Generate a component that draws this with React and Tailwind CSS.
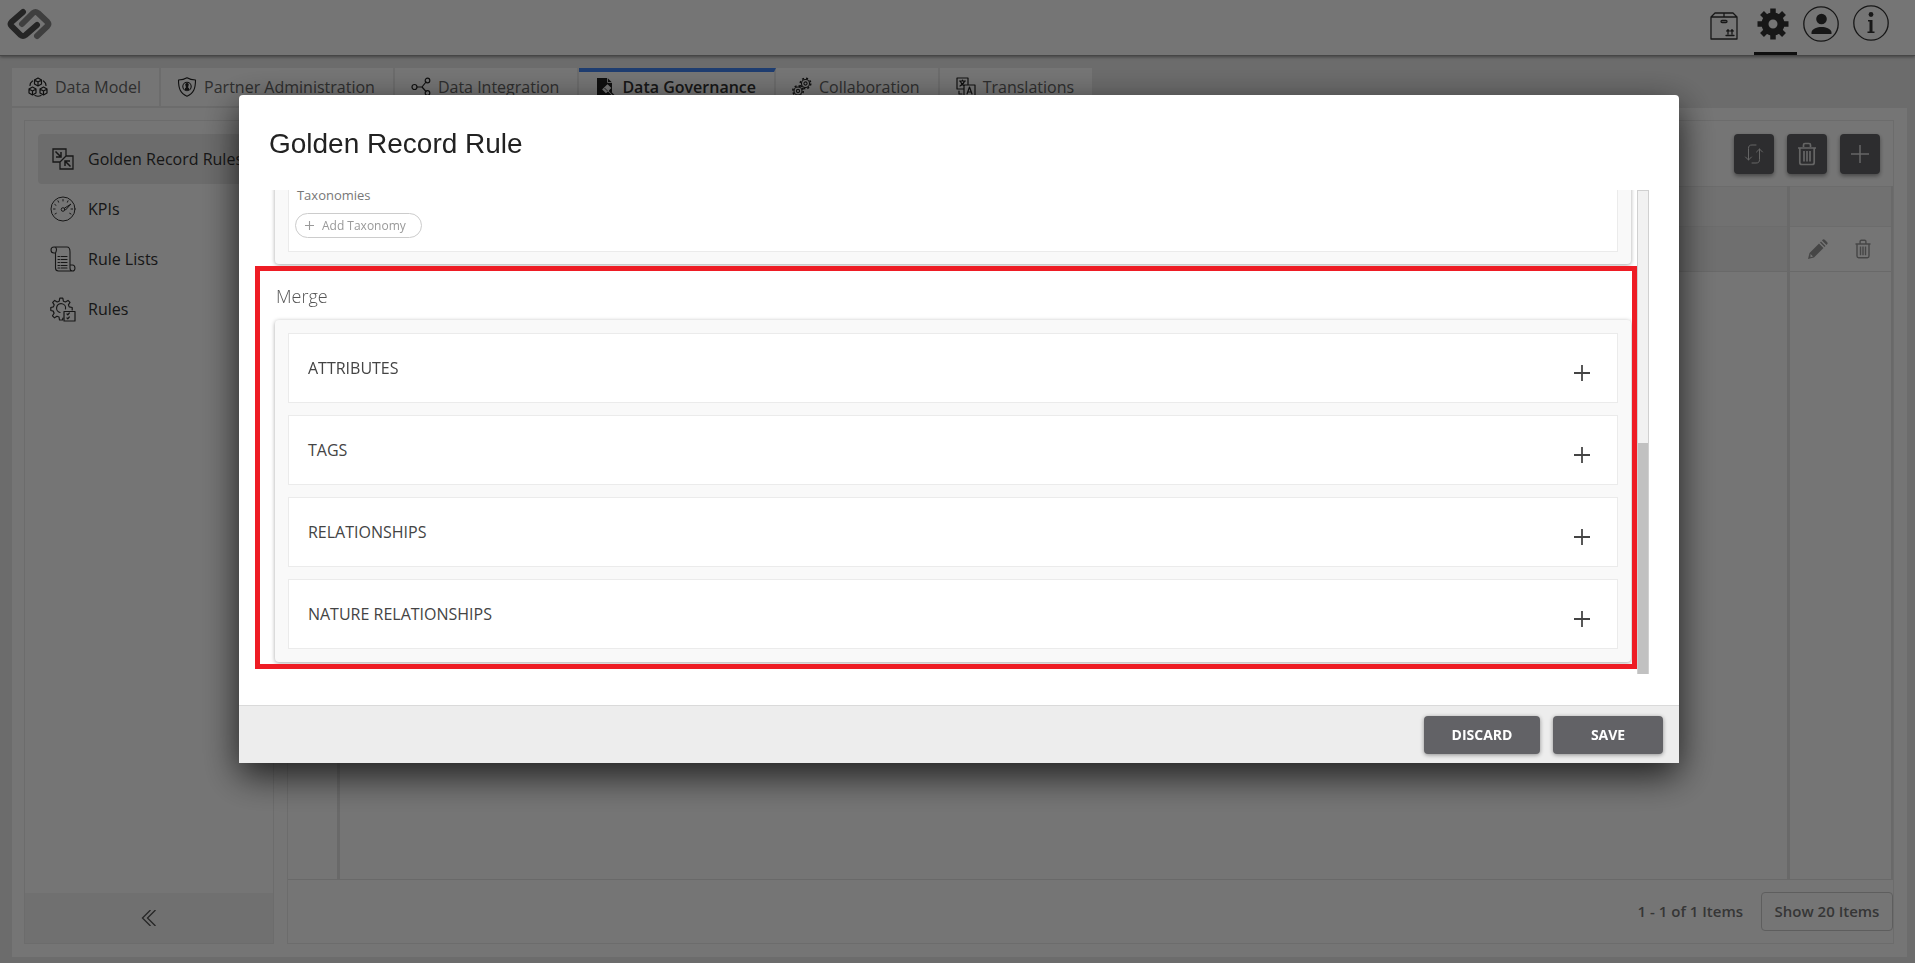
import { useState } from 'react';

const stroke = { fill: 'none', stroke: 'currentColor', strokeLinecap: 'round', strokeLinejoin: 'round' };

function Logo() {
  return (
    <svg className="w-[46px] h-8" viewBox="0 0 46 32" fill="none" strokeWidth="6" strokeLinecap="round" strokeLinejoin="round">
      <path d="M16 16 L27 5 Q29.500 3 32 5 L41.500 14 Q43.500 16 41.500 18 L31 28" stroke="#8a8a8a" />
      <path d="M17 4 L5.500 14 Q3.500 16 5.500 18 L14.500 27 Q17 29 19.500 27 L31 17" stroke="#525252" />
    </svg>
  );
}

function PackageIcon() {
  return (
    <svg className="w-7 h-7" viewBox="0 0 28 28" {...stroke} strokeWidth="1.3">
      <path d="M1 5h26v22H1zM1 5l4-4h18l4 4M14 1v4" />
      <rect x="11" y="8.500" width="6" height="2" rx="1" />
      <path d="M16 23.500h8M18 22v-4M22 22v-4M16.800 19l1.200-1.200 1.200 1.200M20.800 19l1.200-1.200 1.200 1.200" />
    </svg>
  );
}

function GearIcon() {
  return (
    <svg className="w-8 h-8" viewBox="0 0 32 32" fill="none" stroke="currentColor">
      <circle cx="16" cy="16" r="8" strokeWidth="7" />
      <path d="M16 .5v6M16 25.500v6M.5 16h6M25.500 16h6M5 5l4.500 4.500M22.500 22.500L27 27M27 5l-4.500 4.500M9.500 22.500L5 27" strokeWidth="5.500" />
    </svg>
  );
}

function UserIcon() {
  return (
    <svg className="w-9 h-9" viewBox="0 0 36 36" fill="currentColor">
      <circle cx="18" cy="18" r="17.200" fill="none" stroke="currentColor" strokeWidth="1.300" />
      <circle cx="18.500" cy="13" r="5.300" />
      <path d="M8.500 28v-2c1-3.500 5.500-5 10-5s9 1.500 10 5v2z" />
    </svg>
  );
}

function InfoIcon() {
  return (
    <svg className="w-9 h-9" viewBox="0 0 36 36" fill="currentColor">
      <circle cx="18" cy="18" r="17.200" fill="none" stroke="currentColor" strokeWidth="1.300" />
      <circle cx="18" cy="9.500" r="2.400" />
      <path d="M15 15h4.500v11.500H21.500v1.500h-7v-1.500H16.500V16.500H15z" />
    </svg>
  );
}

function CubesIcon() {
  return (
    <svg className="w-5 h-5 shrink-0" viewBox="0 0 20 20" {...stroke} strokeWidth="1.2">
      <path d="M10 1l3.500 2v4L10 9 6.500 7V3zM6.500 3L10 5l3.500-2M10 5v4" />
      <path d="M4.500 10L8 12v4l-3.500 2L1 16v-4zM1 12l3.500 2L8 12M4.500 14v4" />
      <path d="M15.500 10l3.500 2v4l-3.500 2-3.500-2v-4zM12 12l3.500 2 3.500-2M15.500 14v4" />
      <path d="M4.500 4C2.500 5.500 2 7 2 8.500M15.500 4c2 1.500 2.500 3 2.500 4.500M7 18.500c2 1 4 1 6 0" />
    </svg>
  );
}

function ShieldIcon() {
  return (
    <svg className="w-5 h-5 shrink-0" viewBox="0 0 20 20" {...stroke} strokeWidth="1.1">
      <path d="M10 .8c2.500 1.600 5.500 2.200 8.500 2.200 0 8-1.500 13-8.500 16.200C3 16 1.500 11 1.500 3 4.500 3 7.500 2.400 10 .8z" />
      <circle cx="10" cy="9.500" r="4.200" />
      <circle cx="10" cy="7.800" r="1.200" fill="currentColor" />
      <path d="M9.300 9h1.400v2.500h.8v1h-3v-1h.8z" fill="currentColor" />
    </svg>
  );
}

function ShareIcon() {
  return (
    <svg className="w-5 h-5 shrink-0" viewBox="0 0 20 20" {...stroke} strokeWidth="1.200">
      <circle cx="3.500" cy="10" r="2.500" />
      <circle cx="16.500" cy="3.500" r="2.300" />
      <circle cx="16.500" cy="16" r="2.300" />
      <path d="M6 10h5l4-5M11 10l4 4.500" />
    </svg>
  );
}

function GovernIcon() {
  return (
    <svg className="w-5 h-5 shrink-0" viewBox="0 0 20 20" fill="currentColor">
      <path d="M2 1h10.500L17 5.500V19H2z" />
      <path d="M12.500 1v4.500H17" fill="none" stroke="#fff" strokeWidth=".8" />
      <path d="M8 12.500l4.500-4.500 3 3-4.500 4.500zM13 13.500l5 5" fill="#fff" stroke="#fff" strokeWidth="1.200" />
      <path d="M9.500 11l3 3" stroke="currentColor" strokeWidth=".8" />
      <path d="M14.500 14l4.500 4.500" stroke="currentColor" strokeWidth="1.400" />
    </svg>
  );
}

function CogsIcon() {
  return (
    <svg className="w-5 h-5 shrink-0" viewBox="0 0 20 20" {...stroke} strokeWidth="1.100">
      <circle cx="13.500" cy="6.500" r="4" />
      <circle cx="13.500" cy="6.500" r="1.600" />
      <circle cx="13.500" cy="6.500" r="5.200" strokeWidth="1.600" strokeDasharray="2 2.080" strokeLinecap="butt" />
      <circle cx="6" cy="14" r="4" />
      <circle cx="6" cy="14" r="1.600" />
      <circle cx="6" cy="14" r="5.200" strokeWidth="1.600" strokeDasharray="2 2.080" strokeLinecap="butt" />
    </svg>
  );
}

function TranslateIcon() {
  return (
    <svg className="w-5 h-5 shrink-0" viewBox="0 0 20 20" {...stroke} strokeWidth="1.200">
      <path d="M8 12H1V1h11v6M8 8h11v11H8z" />
      <path d="M3.500 4h6M6.500 3v1M8.500 4c-.5 2-2.500 4-4.500 5M4.500 4.500c.5 1.500 2 3.500 3.500 4M11 17l2.500-7 2.500 7M12 15h3M3 14v3h3" />
    </svg>
  );
}

function MergeIcon() {
  return (
    <svg className="w-6 h-6" viewBox="0 0 24 24" fill="none" stroke="currentColor" strokeWidth="1.300">
      <path d="M9 15H2V2h13v7h7v13H9v-7l6-6" />
      <path d="M4.500 4.500l5 5M10 5v5H5M19.500 19.500l-5-5M14 19v-5h5" strokeWidth="1.500" />
    </svg>
  );
}

function GaugeIcon() {
  return (
    <svg className="w-[26px] h-[26px]" viewBox="0 0 26 26" {...stroke} strokeWidth="1">
      <circle cx="13" cy="13" r="12" />
      <circle cx="13" cy="13.500" r="1.800" />
      <path d="M14.500 12.200L21 8l-5.500 6M13 3.500v1.500M8 4.800l.6 1.400M4.800 8.500l1.200.8M3.500 13h1.600M18 4.800l-.6 1.400M21 13h1.600M5 18l1.300-.7M21 18l-1.300-.7" />
    </svg>
  );
}

function ScrollIcon() {
  return (
    <svg className="w-[26px] h-[26px]" viewBox="0 0 26 26" {...stroke} strokeWidth="1.100">
      <path d="M4 7C0 7 0 1 4 1h13c3 0 3 3 3 5v13M4 1c3 0 3 3 1.500 6v15c0 3 2 3 3 3h14c3.500 0 3-6 0-6H20v3c0 2 1 3 2.500 3M5.500 7H4" />
      <path d="M8 10.500h1.500M11 10.500h6M8 13.500h1.500M11 13.500h6M8 16.500h1.500M11 16.500h6M8 19.500h1.500M11 19.500h6M8 22h1.500M11 22h6" />
    </svg>
  );
}

function RulesIcon() {
  return (
    <svg className="w-[26px] h-[26px]" viewBox="0 0 26 26" {...stroke} strokeWidth="1.200">
      <path d="M13 22l-.5 2h-3L9 21l-2-.8-2.500 1.600-2-2 1.600-2.600-.8-2L.8 14.500v-3l2.600-.6.8-2-1.500-2.500 2-2L7.200 6l2-.8.6-3h3l.6 3 2 .8L18 4.400l2 2-1.600 2.500.8 2 3 .6v2.500" />
      <path d="M10 16.500a4.500 4.500 0 1 1 5.500-3.500" />
      <path d="M14 15.500h11v9.500H14z" />
      <path d="M17 18l.8.800 1.500-1.800M17 22l.8.800 1.500-1.800" />
    </svg>
  );
}

function TrashIcon({ className }) {
  return (
    <svg className={className} viewBox="0 0 20 24" fill="none" stroke="currentColor" strokeWidth="1.700">
      <path d="M1 6h18M6.500 5V3c0-1 .5-1.500 1.500-1.500h4c1 0 1.500.5 1.500 1.500v2M2.800 6v14.500c0 1.500.7 2 2 2h10.400c1.300 0 2-.5 2-2V6M7 9v10.500M10 9v10.500M13 9v10.500" />
    </svg>
  );
}

function SwapIcon() {
  return (
    <svg className="w-5 h-5" viewBox="0 0 20 20" {...stroke} strokeWidth="1">
      <path d="M12 1H8C5.500 1 4.500 2 4.500 4.500V16M1.500 13l3 3 3-3M8 19h4c2.500 0 3.500-1 3.500-3.500V5M12.500 8l3-3 3 3" />
    </svg>
  );
}

function PencilIcon() {
  return (
    <svg className="w-5 h-5" viewBox="0 0 20 20" fill="currentColor">
      <path d="M0 20l1.500-6L11 4.500l4.500 4.500L6 18.500zM12 3.500l1-1L17.500 7l-1 1zM14 1.500C15 0 16 0 17 1l2 2c1 1 1 2-.5 3z" />
      <path d="M2.500 15l2.500 2.500-2.500.8z" fill="#fff" />
    </svg>
  );
}

function PlusIcon({ className, width = 1.5 }) {
  return (
    <svg className={className} viewBox="0 0 18 18" stroke="currentColor" strokeWidth={width}>
      <path d="M9 0v18M0 9h18" />
    </svg>
  );
}

const tabs = [
  { label: 'Data Model', icon: CubesIcon },
  { label: 'Partner Administration', icon: ShieldIcon },
  { label: 'Data Integration', icon: ShareIcon },
  { label: 'Data Governance', icon: GovernIcon },
  { label: 'Collaboration', icon: CogsIcon },
  { label: 'Translations', icon: TranslateIcon },
];

const menu = [
  { label: 'Golden Record Rules', icon: MergeIcon },
  { label: 'KPIs', icon: GaugeIcon },
  { label: 'Rule Lists', icon: ScrollIcon },
  { label: 'Rules', icon: RulesIcon },
];

const sections = ['ATTRIBUTES', 'TAGS', 'RELATIONSHIPS', 'NATURE RELATIONSHIPS'];

function Header() {
  return (
    <header className="relative h-14 flex justify-between bg-white border-b border-[#999] shadow-[0_1px_3px_rgba(0,0,0,0.4)] pl-1.5 pr-[26px]">
      <a href="#" aria-label="Home" className="pt-2"><Logo /></a>
      <nav className="flex items-start text-[#333]">
        <button type="button" aria-label="Products" className="mt-3 mr-4"><PackageIcon /></button>
        <button type="button" aria-label="Settings" className="h-[55px] w-[43px] pt-2 pl-[3px] border-b-[3px] border-[#222] flex"><GearIcon /></button>
        <button type="button" aria-label="Profile" className="mt-1.5 ml-1.5 mr-3.5"><UserIcon /></button>
        <button type="button" aria-label="Information" className="mt-[5px]"><InfoIcon /></button>
      </nav>
    </header>
  );
}

function TabBar({ active, onSelect }) {
  return (
    <div className="flex h-10">
      {tabs.map(({ label, icon: Icon }) => (
        <button
          key={label}
          type="button"
          onClick={() => onSelect(label)}
          className={`flex items-center gap-[7px] h-[38px] pl-4 pr-[18px] bg-white border-r-2 border-[#ebebeb] text-base text-left ${
            active === label ? 'border-t-4 border-t-[#4285f4] font-semibold text-[#333] pb-1' : 'text-[#666]'
          }`}
        >
          <span className="text-[#222]"><Icon /></span>
          {label}
        </button>
      ))}
    </div>
  );
}

function Sidebar() {
  return (
    <aside className="w-[250px] shrink-0 flex flex-col border border-[#ebebeb]">
      <nav className="flex-1 pt-[13px] pl-[13px]">
        {menu.map(({ label, icon: Icon }, i) => (
          <a
            key={label}
            href="#"
            className={`flex items-center h-[50px] rounded-l text-base text-[#333] ${i === 0 ? 'bg-[#ebebeb]' : ''}`}
          >
            <span className="w-[50px] flex justify-center"><Icon /></span>
            {label}
          </a>
        ))}
      </nav>
      <button type="button" aria-label="Collapse" className="h-[50px] flex items-center justify-center bg-[#f5f5f5] text-[#555]">
        <svg className="w-4 h-4" viewBox="0 0 16 16" fill="none" stroke="currentColor" strokeWidth="1.400">
          <path d="M9.500 0l-8 8 8 8M14.500 0l-8 8 8 8" />
        </svg>
      </button>
    </aside>
  );
}

function RulesTable() {
  const tool = 'w-10 h-10 rounded flex items-center justify-center bg-[#626266] text-[#ddd] shadow-[0_2px_4px_rgba(0,0,0,0.4)]';
  return (
    <main className="flex-1 flex flex-col border border-[#ebebeb]">
      <div className="flex items-center justify-end gap-[13px] h-[65px] pr-[13px]">
        <button type="button" aria-label="Refresh" className={tool}><SwapIcon /></button>
        <button type="button" aria-label="Delete" className={tool}><TrashIcon className="w-5 h-6" /></button>
        <button type="button" aria-label="Add" className={tool}><PlusIcon className="w-[18px] h-[18px]" /></button>
      </div>
      <div className="flex-1 flex border-b border-[#e5e5e5]">
        <table className="w-full h-full border-collapse">
          <thead>
            <tr className="h-10 bg-[#f7f7f7] border-y border-[#ebebeb]">
              <th className="w-[50px] border-r-[3px] border-[#e5e5e5]" />
              <th className="border-r-[3px] border-[#e5e5e5]" />
              <th className="w-[104px] border-r-2 border-[#e5e5e5]" />
            </tr>
          </thead>
          <tbody>
            <tr className="h-[45px] border-b border-[#e5e5e5]">
              <td className="border-r-[3px] border-[#e5e5e5]" />
              <td className="bg-[#f2f2f2] border-r-[3px] border-[#e5e5e5]" />
              <td className="border-r-2 border-[#e5e5e5]">
                <div className="flex items-center justify-center gap-[26px] text-[#999]">
                  <button type="button" aria-label="Edit"><PencilIcon /></button>
                  <button type="button" aria-label="Remove"><TrashIcon className="w-[18px] h-5" /></button>
                </div>
              </td>
            </tr>
            <tr>
              <td className="border-r-[3px] border-[#e5e5e5]" />
              <td className="border-r-[3px] border-[#e5e5e5]" />
              <td className="border-r-2 border-[#e5e5e5]" />
            </tr>
          </tbody>
        </table>
      </div>
      <div className="flex items-center justify-end gap-[18px] h-[63px] text-[15px] font-semibold text-[#777]">
        <span>1 - 1 of 1 Items</span>
        <button type="button" className="h-[39px] w-[132px] rounded border border-[#ccc]">Show 20 Items</button>
      </div>
    </main>
  );
}

function RuleDialog() {
  const card = 'shrink-0 rounded bg-[#f9f9f9] shadow-[0_1px_4px_rgba(0,0,0,0.35)]';
  return (
    <div
      role="dialog"
      aria-labelledby="rule-title"
      className="relative w-[75.2%] mt-[95px] mr-[-3px] self-start bg-white rounded-sm shadow-[0_12px_36px_rgba(0,0,0,0.75)]"
    >
      <h2 id="rule-title" className="h-[95px] pt-[29px] pl-[30px] text-[28px] leading-10 text-[#222] font-['Liberation_Sans',sans-serif]">
        Golden Record Rule
      </h2>
      <div className="flex h-[484px] pl-7 pr-[30px] mb-[31px]">
        <div className="flex-1 flex flex-col justify-end overflow-hidden pl-2 pr-1.5 pb-3">
          <div className={`${card} px-[13px] pb-3`}>
            <div className="h-[110px] flex flex-col justify-end items-start bg-white border border-[#ebebeb] pl-[6px] pb-[13px]">
              <span className="pl-0.5 mb-2 text-[13px] leading-5 text-[#777]">Taxonomies</span>
              <button type="button" className="flex items-center gap-2 h-[25px] w-[127px] pl-[9px] rounded-full border border-[#ccc] text-xs text-[#999]">
                <PlusIcon className="w-[9px] h-[9px]" width={2.2} />
                Add Taxonomy
              </button>
            </div>
          </div>
          <h3 className="h-14 shrink-0 pt-[18px] pl-px text-lg leading-7 font-light text-[#555]">Merge</h3>
          <div className={`${card} flex flex-col gap-3 p-[13px]`}>
            {sections.map((name) => (
              <section key={name} className="h-[70px] shrink-0 flex items-center justify-between bg-white border border-[#ebebeb] pl-[19px] pr-[27px]">
                <span className="text-base text-[#444]">{name}</span>
                <button type="button" aria-label={`Add ${name}`} className="pt-2.5 text-[#444]">
                  <PlusIcon className="w-4 h-4" width={2} />
                </button>
              </section>
            ))}
          </div>
        </div>
        <div className="w-3 flex items-end bg-[#f1f1f1] border border-[#d0d0d0] border-b-0">
          <div className="w-full h-[231px] bg-[#c1c1c1]" />
        </div>
      </div>
      <div className="absolute left-4 right-[42px] top-[171px] h-[403px] border-5 border-[#ee1c24] pointer-events-none" />
      <footer className="h-[58px] flex items-center justify-end gap-[13px] pr-4 bg-[#ededed] border-t border-[#dadada] text-sm font-bold text-white">
        <button type="button" className="w-[116px] h-[38px] rounded-sm bg-[#626266] shadow-[0_1px_4px_rgba(0,0,0,0.4)]">DISCARD</button>
        <button type="button" className="w-[110px] h-[38px] rounded-sm bg-[#626266] shadow-[0_1px_4px_rgba(0,0,0,0.4)]">SAVE</button>
      </footer>
    </div>
  );
}

export default function App() {
  const [active, setActive] = useState('Data Governance');

  return (
    <div className="min-h-screen flex flex-col bg-[#ebebeb] font-['Open_Sans',sans-serif]">
      <Header />
      <div className="flex-1 flex flex-col pt-3 px-3 pr-2 pb-1.5">
        <TabBar active={active} onSelect={setActive} />
        <div className="flex-1 flex gap-[13px] bg-white p-3 pr-[13px] pb-[13px]">
          <Sidebar />
          <RulesTable />
        </div>
      </div>
      <div className="fixed inset-0 flex justify-center bg-black/54">
        <RuleDialog />
      </div>
    </div>
  );
}
